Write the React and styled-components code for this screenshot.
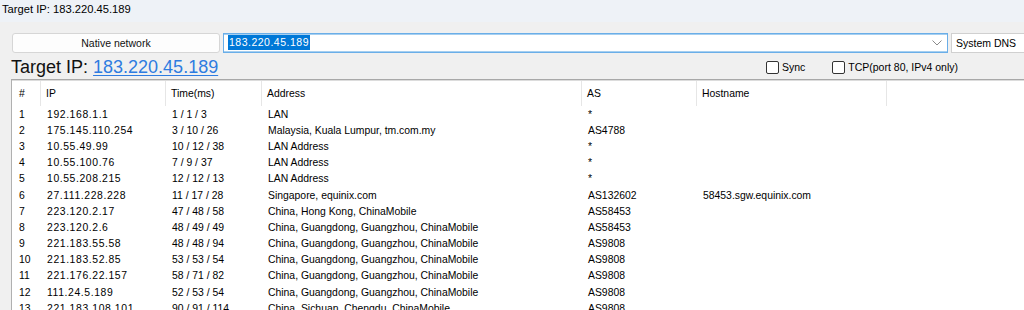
import React from "react";
import styled, { createGlobalStyle } from "styled-components";

const Global = createGlobalStyle`
  html, body { margin: 0; padding: 0; overflow: hidden; background: #f0f0f0; }
  body { font-family: "Liberation Sans", Arial, sans-serif; color: #000; }
  * { box-sizing: border-box; }
`;

const Window = styled.div`
  width: 1024px;
  height: 310px;
  overflow: hidden;
  display: flex;
  flex-direction: column;
  background: #f0f0f0;
`;

const TitleBar = styled.div`
  height: 22px;
  flex: none;
  background: #eef2f7;
  font-size: 11.2px;
  padding: 3px 0 0 2px;
  line-height: 13px;
`;

const Toolbar = styled.div`
  display: flex;
  align-items: center;
  gap: 3px;
  margin-top: 10px;
  padding-left: 12px;
  height: 21px;
  flex: none;
  width: 1200px;
`;

const NetButton = styled.button`
  width: 208px;
  flex: none;
  height: 20px;
  margin-top: 1px;
  border: 1px solid #d6d6d6;
  border-radius: 3px;
  background: #fdfdfd;
  font-family: inherit;
  font-size: 10.5px;
  color: #111;
  padding: 0;
`;

const Combo = styled.div`
  width: ${(p) => p.$w}px;
  flex: none;
  height: 20px;
  margin-top: ${(p) => (p.$focus ? 0 : 1)}px;
  background: #fff;
  border: 1px solid ${(p) => (p.$focus ? "#6aaee8" : "#d0d0d0")};
  ${(p) => (p.$focus ? "box-shadow: inset 0 1px 0 #a6cff0, inset 0 -1px 0 #a6cff0;" : "")}
  display: flex;
  align-items: center;
  padding: 0 4px;
  font-size: 10.5px;
`;

const Selected = styled.span`
  background: #0078d7;
  color: #fff;
  letter-spacing: 0.5px;
  padding: 1px 1px;
  line-height: 13px;
`;

const Spacer = styled.div`
  flex: 1;
`;

const Chevron = styled.svg`
  width: 10px;
  height: 6px;
  margin-right: 1px;
`;

const InfoRow = styled.div`
  display: flex;
  align-items: center;
  height: 26px;
  padding-left: 11px;
  flex: none;
`;

const BigLabel = styled.div`
  font-size: 18px;
  line-height: 22px;
  margin-top: 1px;
  color: #111;
`;

const IpLink = styled.a`
  color: #2e7ce0;
  text-decoration: underline;
  text-decoration-thickness: 1px;
  text-underline-offset: 2px;
`;

const Check = styled.label`
  display: flex;
  align-items: center;
  gap: 3px;
  font-size: 10.5px;
  margin-right: ${(p) => p.$mr}px;
  margin-top: 2px;
`;

const Box = styled.span`
  width: 13px;
  height: 13px;
  border: 1px solid #333;
  border-radius: 2px;
  background: #fff;
  display: inline-block;
`;

const Table = styled.div`
  margin-left: 11px;
  flex: 1;
  background: #fff;
  border-top: 1px solid #a8a8a8;
  border-left: 1px solid #b0b0b0;
  box-shadow: inset 0 1px 0 #dcdcdc;
  font-size: 10.4px;
`;

const COLS = "29px 125px 96px 320px 115px 190px 1fr";

const HeadRow = styled.div`
  display: grid;
  grid-template-columns: ${COLS};
  height: 25px;
  margin-top: 1px;
`;

const HeadCell = styled.div`
  display: flex;
  align-items: center;
  padding-left: ${(p) => (p.$first ? 7 : 5)}px;
  border-right: ${(p) => (p.$last ? "none" : "1px solid #e6e6e6")};
  padding-bottom: 1px;
`;

const Row = styled.div`
  display: grid;
  grid-template-columns: ${COLS};
  height: 16.2px;
  align-items: center;
`;

const Cell = styled.div`
  padding-left: ${(p) => (p.$first ? 7 : 6)}px;
  white-space: nowrap;
  overflow: hidden;
  letter-spacing: ${(p) => (p.$ip ? "0.6px" : "0")};
  line-height: 13px;
`;

const rows = [
  ["1", "192.168.1.1", "1 / 1 / 3", "LAN", "*", ""],
  ["2", "175.145.110.254", "3 / 10 / 26", "Malaysia, Kuala Lumpur, tm.com.my", "AS4788", ""],
  ["3", "10.55.49.99", "10 / 12 / 38", "LAN Address", "*", ""],
  ["4", "10.55.100.76", "7 / 9 / 37", "LAN Address", "*", ""],
  ["5", "10.55.208.215", "12 / 12 / 13", "LAN Address", "*", ""],
  ["6", "27.111.228.228", "11 / 17 / 28", "Singapore, equinix.com", "AS132602", "58453.sgw.equinix.com"],
  ["7", "223.120.2.17", "47 / 48 / 58", "China, Hong Kong, ChinaMobile", "AS58453", ""],
  ["8", "223.120.2.6", "48 / 49 / 49", "China, Guangdong, Guangzhou, ChinaMobile", "AS58453", ""],
  ["9", "221.183.55.58", "48 / 48 / 94", "China, Guangdong, Guangzhou, ChinaMobile", "AS9808", ""],
  ["10", "221.183.52.85", "53 / 53 / 54", "China, Guangdong, Guangzhou, ChinaMobile", "AS9808", ""],
  ["11", "221.176.22.157", "58 / 71 / 82", "China, Guangdong, Guangzhou, ChinaMobile", "AS9808", ""],
  ["12", "111.24.5.189", "52 / 53 / 54", "China, Guangdong, Guangzhou, ChinaMobile", "AS9808", ""],
  ["13", "221.183.108.101", "90 / 91 / 114", "China, Sichuan, Chengdu, ChinaMobile", "AS9808", ""],
];

const headers = ["#", "IP", "Time(ms)", "Address", "AS", "Hostname", ""];

export default function App() {
  return (
    <>
      <Global />
      <Window>
        <TitleBar>Target IP: 183.220.45.189</TitleBar>
        <Toolbar>
          <NetButton>Native network</NetButton>
          <Combo $w={725} $focus>
            <Selected>183.220.45.189</Selected>
            <Spacer />
            <Chevron viewBox="0 0 10 6">
              <path d="M0.5 0.5 L5 5 L9.5 0.5" fill="none" stroke="#8a8a8a" strokeWidth="1" />
            </Chevron>
          </Combo>
          <Combo $w={120}>System DNS</Combo>
        </Toolbar>
        <InfoRow>
          <BigLabel>
            Target IP: <IpLink>183.220.45.189</IpLink>
          </BigLabel>
          <Spacer />
          <Check $mr={27}>
            <Box />
            Sync
          </Check>
          <Check $mr={66}>
            <Box />
            TCP(port 80, IPv4 only)
          </Check>
        </InfoRow>
        <Table>
          <HeadRow>
            {headers.map((h, i) => (
              <HeadCell key={i} $first={i === 0} $last={i === headers.length - 1}>
                {h}
              </HeadCell>
            ))}
          </HeadRow>
          {rows.map((r) => (
            <Row key={r[0]}>
              {r.map((c, i) => (
                <Cell key={i} $first={i === 0} $ip={i === 1}>
                  {c}
                </Cell>
              ))}
              <Cell />
            </Row>
          ))}
        </Table>
      </Window>
    </>
  );
}
